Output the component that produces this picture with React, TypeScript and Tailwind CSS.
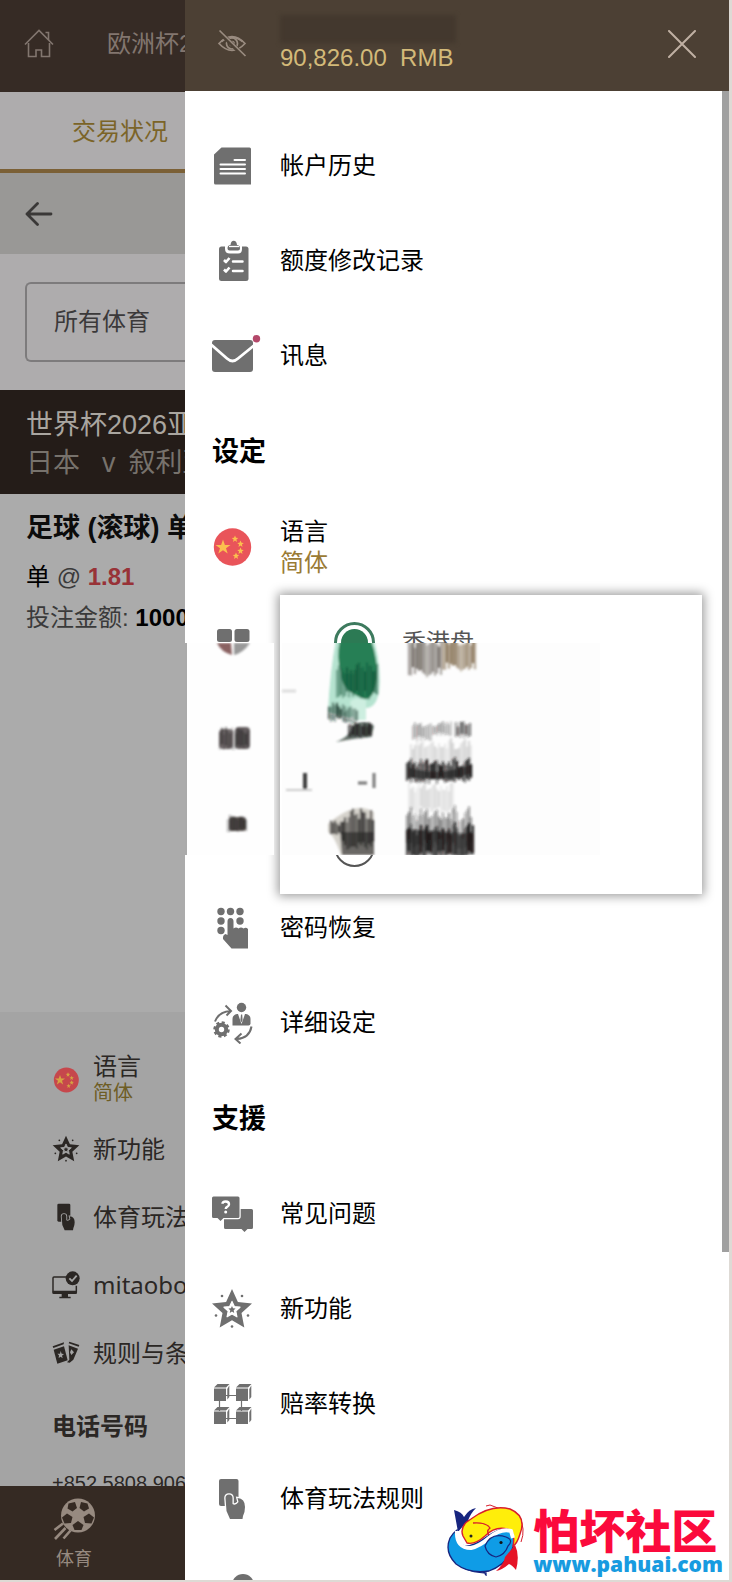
import React from "react";

type IconProps = { className?: string };

const STAR = "M21 1L26.900 13.900L41 15.500L30.500 25.100L33.300 39.500L21 32.300L8.700 39.500L11.500 25.100L1 15.500L15.100 13.900Z";

function HomeIcon() {
  return (
    <svg viewBox="0 0 30 30" className="size-[30px]" fill="none" stroke="currentColor" strokeWidth="1.6">
      <path d="M1 15.500L15 1.500L29 15.500" />
      <path d="M21.500 3.500H24.500V11" />
      <path d="M4.500 14V27.500H12V21H17.500V27.500H25.500V14" />
    </svg>
  );
}

function EyeOffIcon() {
  return (
    <svg viewBox="0 0 30 30" className="size-[30px]" fill="none" stroke="currentColor" strokeWidth="1.7">
      <path d="M2 14.500Q15 0.500 28 14.500Q15 28.500 2 14.500Z" />
      <path d="M4.500 12.500Q15 4.500 25.500 12.500" />
      <circle cx="15" cy="14.500" r="5.500" />
      <circle cx="15" cy="14.500" r="2" fill="currentColor" />
      <path d="M1 1.500L27 27" stroke="#4c4034" strokeWidth="4.500" />
      <path d="M2.500 1.500L28.500 27" />
    </svg>
  );
}

function CloseIcon() {
  return (
    <svg viewBox="0 0 28 28" className="size-7" fill="none" stroke="currentColor" strokeWidth="2" strokeLinecap="round">
      <path d="M1 1L27 27M27 1L1 27" />
    </svg>
  );
}

function BackIcon() {
  return (
    <svg viewBox="0 0 28 24" className="h-6 w-7" fill="none" stroke="currentColor" strokeWidth="2.800" strokeLinecap="round" strokeLinejoin="round">
      <path d="M26 12H2M12.500 1.500L2 12L12.500 22.500" />
    </svg>
  );
}

function HistoryIcon({ className = "size-[42px]" }: IconProps) {
  return (
    <svg viewBox="0 0 42 42" className={className} fill="currentColor">
      <path d="M3 9.500L10.500 2.500H38.500Q40 2.500 40 4V39.500H4.500Q3 39.500 3 38Z" />
      <path d="M23.500 15H34M9.500 19.500H34M9.500 24H34M9.500 28.500H34" stroke="#fff" strokeWidth="2" strokeLinecap="round" />
    </svg>
  );
}

function ClipboardIcon({ className = "size-[42px]" }: IconProps) {
  return (
    <svg viewBox="0 0 42 42" className={className} fill="currentColor">
      <rect x="8" y="6.500" width="29.500" height="34.500" rx="2.500" />
      <path d="M14 4.500H31V9Q31 13.500 27 13.500H19Q14 13.500 14 9Z" fill="#fff" />
      <path d="M16.500 8.500Q16.500 5 19.500 5Q20 0.800 22.700 0.800Q25.500 0.800 26 5Q29 5 29 8.500Q29 10.500 27 10.500H18.500Q16.500 10.500 16.500 8.500Z" />
      <path d="M18 6.500H28" stroke="#fff" strokeWidth="1.300" />
      <path d="M22 21.500H31.500M22 31H31.500" stroke="#fff" strokeWidth="2.500" strokeLinecap="round" />
      <path d="M13 20L15 22L18.500 18M13 29.500L15 31.500L18.500 27.500" stroke="#fff" strokeWidth="2.600" fill="none" strokeLinejoin="round" />
    </svg>
  );
}

function MailIcon({ className = "size-[42px]" }: IconProps) {
  return (
    <svg viewBox="0 0 42 42" className={className} fill="currentColor" overflow="visible">
      <rect x="1" y="5" width="41" height="32" rx="3" />
      <path d="M0 9.500L16 23.500Q21.500 28.500 27 23.500L43 10.500" fill="none" stroke="#fff" strokeWidth="2.800" />
      <circle cx="45.500" cy="3.800" r="3.700" fill="#b4486a" />
    </svg>
  );
}

function FlagIcon({ className = "size-[42px]" }: IconProps) {
  return (
    <svg viewBox="0 0 42 42" className={className}>
      <circle cx="21.500" cy="21" r="18.700" fill="#e9545a" />
      <g fill="#fbc04e">
        <path d="M12 13.500L13.900 18.900L19.500 18.900L15 22.300L16.700 27.600L12 24.300L7.300 27.600L9 22.300L4.500 18.900L10.100 18.900Z" />
        <path d="M24 9.500L25 11.800L27.300 12L25.400 13.500L26 16L24 14.600L22 16L22.600 13.500L20.700 12L23 11.800Z" />
        <path d="M29.500 14.500L30.500 16.800L32.800 17L30.900 18.500L31.500 21L29.500 19.600L27.500 21L28.100 18.500L26.200 17L28.500 16.800Z" />
        <path d="M29.500 21.500L30.500 23.800L32.800 24L30.900 25.500L31.500 28L29.500 26.600L27.500 28L28.100 25.500L26.200 24L28.500 23.800Z" />
        <path d="M25 26.500L26 28.800L28.300 29L26.400 30.500L27 33L25 31.600L23 33L23.600 30.500L21.700 29L24 28.800Z" />
      </g>
    </svg>
  );
}

function TilesIcon({ className = "size-[42px]" }: IconProps) {
  return (
    <svg viewBox="0 0 42 42" className={className} fill="currentColor">
      <rect x="6" y="7" width="15" height="13" rx="2.500" />
      <rect x="23.500" y="7" width="15" height="13" rx="2.500" />
    </svg>
  );
}

function KeypadIcon({ className = "size-[42px]" }: IconProps) {
  return (
    <svg viewBox="0 0 42 42" className={className} fill="currentColor">
      {[[10, 4.5], [19.5, 4.5], [29, 4.5], [10, 14], [29, 14], [10, 23.5]].map(([x, y]) => (
        <circle key={`${x}-${y}`} cx={x} cy={y} r="3.700" />
      ))}
      <path d="M16.500 14.500Q16.500 11 19.500 11Q22.500 11 22.500 14.500V21.500Q25 19.700 27.500 21.500Q30 19.700 32.500 21.500Q35 19.700 37 22V41.500H20.500L12 32Q11.500 28 14.500 27L16.500 28Z" />
    </svg>
  );
}

function AccountGearIcon({ className = "size-[42px]" }: IconProps) {
  return (
    <svg viewBox="0 0 42 42" className={className} fill="currentColor">
      <circle cx="30.500" cy="5.500" r="4.700" />
      <path d="M21.500 23.500V17Q21.500 13 26 12H35Q39.500 13 39.500 17V21.500Q39.500 23.500 37.500 23.500Z" />
      <path d="M27 12L30.500 22L34 12Z" fill="#fff" />
      <path d="M30 12.500H31.200L31.600 18L30.500 20.500L29.400 18Z" />
      <circle cx="10.500" cy="27.500" r="4.700" fill="none" stroke="currentColor" strokeWidth="4" />
      <circle cx="10.500" cy="27.500" r="7" fill="none" stroke="currentColor" strokeWidth="2.500" strokeDasharray="3 2.500" />
      <g fill="none" stroke="currentColor" strokeWidth="2">
        <path d="M4 19.500Q8 9.500 19.500 9M14.500 3.500L20 9L15.500 13.500" />
        <path d="M40.500 24.500Q38.500 36 26 37M30.500 31.500L24.500 37L29.500 41.500" />
      </g>
    </svg>
  );
}

function FaqIcon({ className = "size-[42px]" }: IconProps) {
  return (
    <svg viewBox="0 0 42 42" className={className} fill="currentColor">
      <path d="M13 16H40.500Q42 16 42 17.500V34.500Q42 36 40.500 36H36.500L33.500 39L30.500 36H14.500Q13 36 13 34.500Z" />
      <path d="M1 5Q1 3.500 2.500 3.500H27Q28.500 3.500 28.500 5V23.500Q28.500 25 27 25H12.500L9.500 28L6.500 25H2.500Q1 25 1 23.500Z" stroke="#fff" strokeWidth="2.400" paintOrder="stroke" />
      <path d="M11.500 10.800Q11.500 8.500 14.700 8.500Q18 8.500 18 11.200Q18 13 16.200 13.800Q14.700 14.500 14.700 16" fill="none" stroke="#fff" strokeWidth="2.400" />
      <circle cx="14.700" cy="19" r="1.500" fill="#fff" />
    </svg>
  );
}

function StarIcon({ className = "size-[42px]", hole = "#fff" }: IconProps & { hole?: string }) {
  return (
    <svg viewBox="0 0 42 42" className={className} fill="currentColor">
      <path d={STAR} />
      <path d={STAR} transform="translate(12.600 13) scale(.4)" fill={hole} stroke={hole} strokeWidth="3" strokeLinejoin="round" />
      <path d={STAR} transform="translate(17.200 17.800) scale(.18)" />
      {[[11, 8], [31, 8], [5, 27.500], [37, 27.500], [21, 38.500]].map(([x, y]) => (
        <circle key={`${x}-${y}`} cx={x} cy={y} r="1.300" />
      ))}
    </svg>
  );
}

function CubesIcon({ className = "size-[42px]" }: IconProps) {
  return (
    <svg viewBox="0 0 42 42" className={className} fill="currentColor">
      <path d="M8.500 18V28M30.500 18V28M15 12.500H26M15 35.500H26" stroke="currentColor" strokeWidth="1.200" />
      {[[3, 0.5], [25, 0.5], [3, 23.5], [25, 23.5]].map(([x, y]) => (
        <g key={`${x}-${y}`} transform={`translate(${x} ${y})`}>
          <path d="M0 5H12V17.500H0Z" />
          <path d="M0 4L3.500 0.500H15.500L12 4Z" />
          <path d="M13.300 5.500L15.300 2V13.500L13.300 16Z" />
        </g>
      ))}
    </svg>
  );
}

function TouchCardIcon({ className = "size-[42px]", gap = "#fff" }: IconProps & { gap?: string }) {
  return (
    <svg viewBox="0 0 42 42" className={className} fill="currentColor">
      <rect x="8" y="1" width="19.500" height="27" rx="2" />
      <path
        d="M14.500 20Q14.500 16.500 18 16.500Q21.500 16.500 21.500 20V26Q24.500 28 27.500 24L26.500 20Q34 20.500 34 29Q34 34 32 38L31.500 41H19L15.500 33Z"
        stroke={gap}
        strokeWidth="2.600"
        paintOrder="stroke"
      />
    </svg>
  );
}

function MonitorIcon({ className = "size-[42px]" }: IconProps) {
  return (
    <svg viewBox="0 0 42 42" className={className} fill="currentColor">
      <path d="M24 9H3Q1.500 9 1.500 10.500V32Q1.500 33.500 3 33.500H35Q36.500 33.500 36.500 32V22" fill="none" stroke="currentColor" strokeWidth="2.200" />
      <path d="M1 29.500H37V34H24V38.500H28V41H11V38.500H14.500V34H1Z" />
      <circle cx="31" cy="11" r="10.500" />
      <path d="M26 11L30 15L37 7" fill="none" stroke="#a4a4a4" strokeWidth="2.800" />
    </svg>
  );
}

function TicketsIcon({ className = "size-[42px]" }: IconProps) {
  return (
    <svg viewBox="0 0 42 42" className={className} fill="currentColor">
      <path d="M1 11L18 5L17.500 8L2 13.500ZM26 4L41 9L40 11.500L25 6.500Z" />
      <path d="M2.500 16L18 11L23.500 32L8 37Z" />
      <path d="M25 9.500L39 14.500L32 31L26.500 35.500L22.500 35L26 31Z" />
      <path d="M13 18L14.500 22L18 22.500L15 25L16 29L13 26.500L10 28.500L10.500 24.500L8 22L12 22ZM29 15.500L33 20L29 24L27 20Z" fill="#a4a4a4" />
    </svg>
  );
}

function BallIcon() {
  return (
    <svg viewBox="0 0 42 42" className="size-[42px]" fill="currentColor">
      <circle cx="25" cy="17.500" r="17" />
      <g fill="#352a23">
        <path d="M15.500 5.500L22 4L24 10L19.500 13.500L14.500 10.500Z" />
        <path d="M28 4L34.500 5.500L36 10.500L31 13.500L26.500 10Z" />
        <path d="M14 15.500L19.500 19L18 25L11.500 25.500L9 19.500Z" />
        <path d="M36 15.500L41 19.500L38.500 25.500L32 25L30.500 19Z" />
        <path d="M25 23L30.500 27L28.500 32H21.500L19.500 27Z" />
      </g>
      <path d="M10 25.500L1.500 32M12.500 30L2 41M17.500 32.500L10.500 40.500" fill="none" stroke="currentColor" strokeWidth="2.600" />
    </svg>
  );
}

function FishLogo() {
  return (
    <svg viewBox="0 0 78 72" className="h-[72px] w-[78px]">
      <path d="M39 2L43 1L72 12Q79 25 74 38" fill="none" stroke="#d81e2c" strokeWidth="1" />
      <path d="M4 34Q0 43 5 52Q13 68 39 69V71L36 67" fill="none" stroke="#17257f" strokeWidth="1.300" />
      <path d="M7 6Q15 8 17 13Q22 5 29 4Q23 10 21 17Q15 23 11 28Q9 17 7 6Z" fill="#17257f" />
      <path d="M10 28Q8 40 18 42Q27 42 38 34Q54 22 66 25Q70 32 67 40Q62 60 42 67Q22 70 9 60Q-3 48 3 34Q6 29 10 26Z" fill="#0f9ce6" stroke="#17257f" strokeWidth="1.300" />
      <path d="M16 32Q12 22 24 15Q44 0 63 5Q80 12 73 30Q70 40 66 42Q69 28 60 25Q48 22 38 32Q28 41 20 39Z" fill="#ffee0a" stroke="#d81e2c" strokeWidth="1.400" />
      <path d="M10 27Q9 44 24 44Q33 42 42 34Q54 24 64 27L66 34" fill="none" stroke="#fff" strokeWidth="4" />
      <path d="M38 42Q44 28 59 33Q67 36 61 42Q58 51 49 53Q40 51 38 42Z" fill="#0f9ce6" stroke="#17257f" strokeWidth="1.200" />
      <path d="M26 19Q39 18 43 24Q39 27 42 31" fill="none" stroke="#d81e2c" strokeWidth="1.300" />
      <circle cx="24" cy="32" r="1.500" fill="#222" />
      <circle cx="54" cy="38.500" r="1.600" fill="#111" />
      <path d="M68 41Q73 51 69 66Q65 61 62 60Q55 66 49 67Q57 60 58 53Z" fill="#e51426" />
    </svg>
  );
}

type SmearProps = { x: number; y: number; w: number; h: number; color?: string; strength?: number };

function noise(n: number) {
  const v = Math.sin(n * 127.1) * 43758.5453;
  return v - Math.floor(v);
}

function Smear({ x, y, w, h, color = "#1c1a1a", strength = 0.8 }: SmearProps) {
  const count = Math.floor(w / 2);
  return (
    <g stroke={color} strokeWidth="2.400">
      {Array.from({ length: count }, (_, i) => {
        const a = noise(i + x);
        const b = noise(i * 3 + y);
        return (
          <line
            key={i}
            x1={x + i * 2 + 1}
            x2={x + i * 2 + 1}
            y1={y + a * h * 0.35}
            y2={y + h - b * h * 0.25}
            opacity={strength * (0.4 + 0.6 * b)}
          />
        );
      })}
    </g>
  );
}

function DistortedBand() {
  return (
    <svg viewBox="185 643 415 212" className="pointer-events-none absolute top-12 left-0 h-[212px] w-[415px]" aria-hidden="true">
      <defs>
        <filter id="soft" x="-20%" y="-20%" width="140%" height="140%">
          <feGaussianBlur stdDeviation="1" />
        </filter>
      </defs>
      <rect x="282" y="643" width="318" height="212" fill="#fdfdfd" />
      <rect x="186" y="643" width="88" height="212" fill="#fefefe" />
      <rect x="185" y="643" width="2" height="212" fill="#aaa" />
      <g filter="url(#soft)">
        <path d="M217 643H231L232 655Q221 652 217 643Z" fill="#8a6262" />
        <path d="M234 643H250Q243 653 234 655Z" fill="#999" />
        <rect x="219" y="729" width="14" height="20" rx="4" fill="#766e70" />
        <rect x="235" y="727" width="15" height="22" rx="4" fill="#665f61" />
        <Smear x={219} y={727} w={31} h={23} strength={0.5} />
        <rect x="229" y="817" width="17" height="14" rx="3" fill="#5b5552" />
        <Smear x={227} y={814} w={21} h={19} strength={0.5} />
        <path d="M282 691H296" stroke="#ddd" strokeWidth="3" />
        <path d="M305 773V791" stroke="#3d3d3d" strokeWidth="4" />
        <path d="M286 790H312" stroke="#ccc" strokeWidth="2" />
        <path d="M336 640H374Q382 670 379 692Q376 708 366 708L350 718L328 712Q330 670 336 640Z" fill="#b6e3d0" />
        <path d="M340 640H371Q378 660 377 678Q373 704 362 698Q340 690 341 672Q336 658 340 640Z" fill="#267f55" />
        <Smear x={336} y={662} w={42} h={38} color="#14563a" strength={0.7} />
        <path d="M350 702Q354 696 366 700V720H354Z" fill="#cdeee0" />
        <Smear x={328} y={702} w={18} h={20} color="#0d2b20" />
        <Smear x={344} y={706} w={14} h={18} color="#0d2b20" strength={0.6} />
        <path d="M336 742Q352 735 352 726Q364 718 374 726L371 737Q356 738 336 742Z" fill="#26372f" opacity=".7" />
        <Smear x={348} y={722} w={24} h={17} />
        <path d="M358 783H367M374 773V788" stroke="#777" strokeWidth="3" />
        <path d="M328 824Q355 800 374 812V855H341Q334 835 328 832Z" fill="#d6d3cc" />
        <Smear x={330} y={820} w={12} h={16} />
        <Smear x={342} y={808} w={33} h={44} />
        <path d="M340 832H374V855H342Z" fill="#22211f" opacity=".6" />
        <Smear x={408} y={632} w={34} h={46} color="#574f47" strength={0.8} />
        <Smear x={442} y={632} w={34} h={40} color="#776040" strength={0.85} />
        <Smear x={412} y={721} w={20} h={20} strength={0.4} />
        <Smear x={432} y={721} w={20} h={15} strength={0.4} />
        <Smear x={455} y={721} w={16} h={17} strength={0.7} />
        <Smear x={410} y={738} w={62} h={32} strength={0.15} />
        <Smear x={406} y={757} w={66} h={27} strength={1} />
        <path d="M408 767Q438 777 470 765V774Q438 783 408 777Z" fill="#1c1a1a" opacity=".6" />
        <Smear x={408} y={780} w={46} h={35} strength={0.12} />
        <Smear x={406} y={805} w={66} h={45} strength={0.45} />
        <Smear x={406} y={822} w={68} h={38} strength={1} />
        <path d="M406 829L440 831L474 834V855H408Z" fill="#1c1a1a" opacity=".5" />
      </g>
    </svg>
  );
}

function MenuRow({ icon, label }: { icon: React.ReactNode; label: string }) {
  return (
    <li>
      <a href="#" className="flex h-[95px] items-center gap-[27px] pl-[26px]">
        {icon}
        <span>{label}</span>
      </a>
    </li>
  );
}

function SectionTitle({ children }: { children: React.ReactNode }) {
  return <h2 className="flex h-24 items-center pt-1 pl-[27px] text-[27px] font-bold">{children}</h2>;
}

function FooterLink({ icon, label }: { icon: React.ReactNode; label: string }) {
  return (
    <li>
      <a href="#" className="flex h-[68px] items-center gap-[13px]">
        {icon}
        <span>{label}</span>
      </a>
    </li>
  );
}

function BetPage() {
  return (
    <div className="flex w-[185px] shrink-0 flex-col overflow-hidden whitespace-nowrap bg-[#ababab] text-2xl">
      <header className="flex h-[92px] shrink-0 items-center gap-[53px] bg-[#362b25] pb-1 pl-6 text-[#82766f]">
        <button type="button" aria-label="首页" className="shrink-0">
          <HomeIcon />
        </button>
        <span>欧洲杯2</span>
      </header>
      <main className="min-h-0 flex-1 overflow-hidden">
        <div className="flex h-[81px] items-center border-b-4 border-[#7b6036] bg-[#aeacad] pt-0.5 pl-[72px]">
          <a href="#" className="text-[#7b6428]">交易状况</a>
        </div>
        <div className="flex h-[81px] items-center bg-[#999896] pl-[25px] text-[#3a3837]">
          <button type="button" aria-label="返回">
            <BackIcon />
          </button>
        </div>
        <div className="bg-[#aeacad] pt-7 pb-7 pl-[25px]">
          <button type="button" className="flex h-20 w-full items-center rounded-l-md border-2 border-r-0 border-[#7d7b7c] pl-[27px] text-[#3b393a]">
            所有体育
          </button>
        </div>
        <div className="h-[104px] bg-[#241c18] pt-4 pl-[26px] text-[27px] leading-[38px]">
          <p className="text-[#aaa6a0]">世界杯2026亚</p>
          <p className="flex text-[#77726c]">
            <span>日本</span>
            <span className="ml-[22px]">v</span>
            <span className="ml-[13px]">叙利亚</span>
          </p>
        </div>
        <section className="h-[518px] pt-[15px] pl-[26px] text-[#3a3a3a]">
          <h1 className="text-[27px] leading-[38px] font-bold text-[#0c0c0c]">足球 (滚球) 单</h1>
          <p className="mt-[9px] leading-[41px]">
            <span className="text-black">单</span> @ <b className="text-[#983237]">1.81</b>
          </p>
          <p className="leading-[41px]">
            投注金额: <b className="text-black">1000</b>
          </p>
        </section>
        <footer className="bg-[#a4a4a4] pt-[33px] pl-[52px] text-[#2b2724]">
          <a href="#" className="flex h-[70px] items-center gap-[13px]">
            <FlagIcon className="size-7 shrink-0 brightness-85" />
            <span className="flex flex-col leading-[27px]">
              <span>语言</span>
              <span className="text-xl leading-[27px] text-[#6e5d25]">简体</span>
            </span>
          </a>
          <ul className="font-['Noto_Sans','Noto_Sans_CJK_SC',sans-serif]">
            <FooterLink icon={<StarIcon className="size-7 shrink-0" hole="#a4a4a4" />} label="新功能" />
            <FooterLink icon={<TouchCardIcon className="size-7 shrink-0" gap="#a4a4a4" />} label="体育玩法" />
            <FooterLink icon={<MonitorIcon className="size-7 shrink-0" />} label="mitaobo" />
            <FooterLink icon={<TicketsIcon className="size-7 shrink-0" />} label="规则与条" />
          </ul>
          <h2 className="mt-5 leading-[40px] font-bold">电话号码</h2>
          <p className="mt-5 text-xl leading-[32px]">+852 5808 906</p>
        </footer>
      </main>
      <nav className="h-[94px] shrink-0 bg-[#352a23] pt-3 pl-[53px] text-[#978a80]">
        <a href="#" className="flex w-[42px] flex-col items-center text-lg leading-[38px]">
          <BallIcon />
          <span>体育</span>
        </a>
      </nav>
    </div>
  );
}

function OddsPopup() {
  const radio = "size-[41px] shrink-0 appearance-none rounded-full border-2 border-[#555] bg-white";
  return (
    <fieldset className="absolute top-0 right-5 left-[95px] flex h-[299px] flex-col justify-between bg-white px-[54px] py-[27px] shadow-[0_0_10px_2px_rgba(0,0,0,0.4)]">
      <label className="flex items-center gap-[27px] text-[#555]">
        <input
          type="radio"
          name="odds"
          defaultChecked
          className="size-[41px] shrink-0 appearance-none rounded-full border-[3px] border-[#3d7a5e] bg-[#2c7a54] bg-clip-content p-1"
        />
        <span>香港盘</span>
      </label>
      <input type="radio" name="odds" aria-label="2" className={radio} />
      <input type="radio" name="odds" aria-label="3" className={radio} />
    </fieldset>
  );
}

function Drawer() {
  return (
    <aside className="flex min-w-0 flex-1 flex-col bg-white">
      <header className="flex h-[91px] shrink-0 items-center bg-[#4c4034] pr-[33px] pb-1 pl-8">
        <button type="button" aria-label="隐藏余额" className="text-[#9a8c80]">
          <EyeOffIcon />
        </button>
        <div className="ml-7 flex-1 pl-[5px] text-2xl text-[#d3ba79]">
          <div className="h-7 w-[176px] bg-[#43382e] blur-[2px]" />
          <p className="whitespace-pre leading-[30px]">90,826.00  RMB</p>
        </div>
        <button type="button" aria-label="关闭" className="text-[#c0b0a3]">
          <CloseIcon />
        </button>
      </header>
      <div className="flex min-h-0 flex-1 overflow-hidden">
        <div className="min-w-0 flex-1 pt-[27px] text-2xl text-black">
          <ul className="[&_svg]:shrink-0 [&_svg]:text-[#6f6f6f]">
            <MenuRow icon={<HistoryIcon />} label="帐户历史" />
            <MenuRow icon={<ClipboardIcon />} label="额度修改记录" />
            <MenuRow icon={<MailIcon />} label="讯息" />
          </ul>
          <SectionTitle>设定</SectionTitle>
          <a href="#" className="flex h-24 items-center gap-[27px] pl-[26px]">
            <FlagIcon />
            <span className="flex flex-col leading-[31px]">
              <span>语言</span>
              <span className="text-[#9a7b35]">简体</span>
            </span>
          </a>
          <div className="relative h-[285px] pl-[26px] text-[#6f6f6f]">
            <div className="flex h-[95px] items-center">
              <TilesIcon />
            </div>
            <OddsPopup />
            <DistortedBand />
          </div>
          <ul className="[&_svg]:shrink-0 [&_svg]:text-[#6f6f6f]">
            <MenuRow icon={<KeypadIcon />} label="密码恢复" />
            <MenuRow icon={<AccountGearIcon />} label="详细设定" />
          </ul>
          <SectionTitle>支援</SectionTitle>
          <ul className="[&_svg]:shrink-0 [&_svg]:text-[#6f6f6f]">
            <MenuRow icon={<FaqIcon />} label="常见问题" />
            <MenuRow icon={<StarIcon />} label="新功能" />
            <MenuRow icon={<CubesIcon />} label="赔率转换" />
            <MenuRow icon={<TouchCardIcon />} label="体育玩法规则" />
          </ul>
          <div className="pt-7 pl-[47px]">
            <div className="size-[22px] rounded-full bg-[#6f6f6f]" />
          </div>
        </div>
        <div className="w-[7px] shrink-0">
          <div className="h-[78%] bg-[#a0a0a0]" />
        </div>
      </div>
    </aside>
  );
}

export default function App() {
  return (
    <div className="relative flex h-screen overflow-hidden border-r-[3px] border-b-2 border-[#dedad5] font-['Liberation_Sans','Noto_Sans_CJK_SC',sans-serif]">
      <BetPage />
      <Drawer />
      <a href="#" className="absolute right-[6px] bottom-1 flex items-end gap-2">
        <FishLogo />
        <span className="flex flex-col font-['Open_Sans','Noto_Sans_CJK_SC',sans-serif]">
          <span className="text-[46px] leading-[44px] font-black text-[#fb0a3c]">怕坏社区</span>
          <span className="text-[21px] leading-[24px] font-extrabold text-[#179be0]">www.pahuai.com</span>
        </span>
      </a>
    </div>
  );
}
